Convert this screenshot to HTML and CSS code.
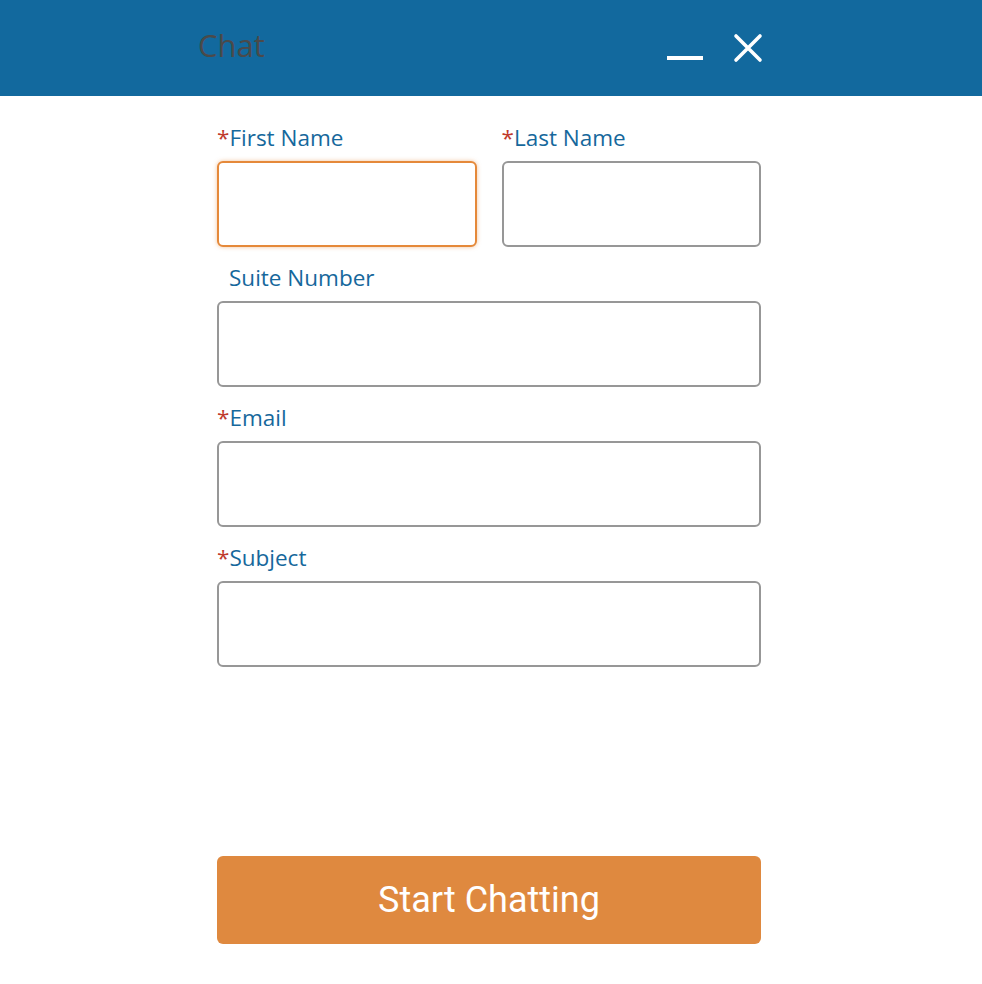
FILE: index.html
```html
<!DOCTYPE html>
<html lang="en">
<head>
  <meta charset="UTF-8">
  <meta name="viewport" content="width=device-width, initial-scale=1.0">
  <title>Chat</title>
  <link rel="stylesheet" href="styles.css">
</head>
<body>
  <header>
    <div class="header-inner">
      <h1>Chat</h1>
      <div class="controls">
        <button class="icon-btn" aria-label="Minimize">
          <svg width="36" height="36" viewBox="0 0 36 36"><rect x="0" y="26" width="36" height="4" fill="#fff"/></svg>
        </button>
        <button class="icon-btn" aria-label="Close">
          <svg width="30" height="30" viewBox="0 0 30 30"><path d="M3 3 L27 27 M27 3 L3 27" stroke="#fff" stroke-width="3.6" stroke-linecap="round"/></svg>
        </button>
      </div>
    </div>
  </header>

  <main class="container">
    <form class="chat-form">
      <div class="row">
        <div class="field">
          <label><span class="req">*</span>First Name</label>
          <input type="text" class="focused">
        </div>
        <div class="field">
          <label><span class="req">*</span>Last Name</label>
          <input type="text">
        </div>
      </div>
      <div class="field">
        <label class="indent">Suite Number</label>
        <input type="text">
      </div>
      <div class="field">
        <label><span class="req">*</span>Email</label>
        <input type="text">
      </div>
      <div class="field">
        <label><span class="req">*</span>Subject</label>
        <input type="text">
      </div>
      <button type="button" class="btn">Start Chatting</button>
    </form>
  </main>
</body>
</html>
```

FILE: styles.css
```css
* {
  margin: 0;
  padding: 0;
  box-sizing: border-box;
}
body, html {
  font-family: "Open Sans", Lato, sans-serif;
  background-color: #ffffff;
}
header {
  background-color: #12699e;
  height: 96px;
}
.header-inner {
  width: 586px;
  margin: 0 auto;
  height: 100%;
  display: flex;
  justify-content: space-between;
  align-items: center;
  padding-right: 21px;
}
h1 {
  font-size: 31px;
  font-weight: 400;
  color: #4a4a4a;
  margin-top: -6px;
}
.controls {
  display: flex;
  align-items: center;
  gap: 30px;
}
.icon-btn {
  background: none;
  border: none;
  display: flex;
}
.container {
  width: 548px;
  margin: 0 auto;
  padding: 28px 4px 0 0;
}
.chat-form {
  display: flex;
  flex-direction: column;
  gap: 17px;
}
.row {
  display: flex;
  gap: 25px;
}
.row .field {
  flex: 1;
  min-width: 0;
}
.field {
  display: flex;
  flex-direction: column;
  gap: 9px;
}
label {
  font-size: 22.5px;
  font-weight: 500;
  line-height: 28px;
  color: #16689c;
  height: 28px;
}
label.indent {
  padding-left: 12px;
}
.req {
  color: #c0392b;
}
input {
  width: 100%;
  height: 86px;
  border: 2px solid #979797;
  border-radius: 6px;
  font-size: 20px;
  padding: 0 12px;
  outline: none;
}
input.focused {
  border-color: #e5893a;
  box-shadow: 0 0 4px rgba(229, 137, 58, 0.5);
}
.btn {
  margin-top: 172px;
  height: 88px;
  background-color: #df893f;
  color: #ffffff;
  border: none;
  border-radius: 6px;
  font-family: Roboto, "Open Sans", sans-serif;
  font-size: 36px;
  cursor: pointer;
}
```
